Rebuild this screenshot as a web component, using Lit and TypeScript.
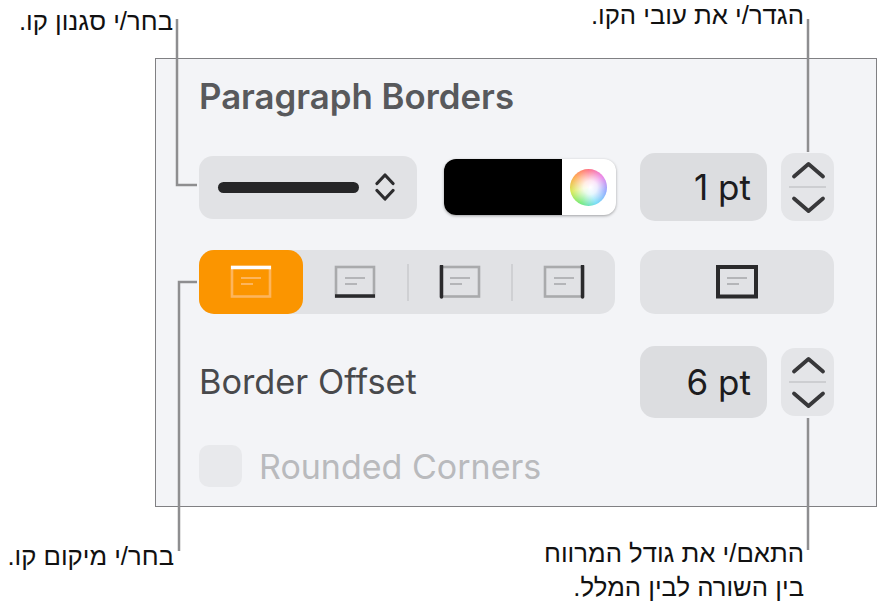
import { LitElement, html, css, svg } from 'lit';
import { customElement } from 'lit/decorators.js';

type Side = 'top' | 'bottom' | 'left' | 'right' | 'all';

/** Small paragraph glyph with the active border side drawn heavier */
function borderIcon(side: Side, selected = false) {
  const muted = selected ? '#fdb55c' : '#a9aaac';
  const strong = selected ? '#ffffff' : '#2a2a2c';
  const lines = selected ? '#fdb55c' : '#b4b5b8';
  const weight = side === 'all' ? 4 : 2.6;
  return html`<svg class="icon" width="42" height="34" viewBox="0 0 42 34">
    <rect x="2" y="2" width="38" height="29.500" fill="none" stroke=${side === 'all' ? strong : muted} stroke-width=${weight} />
    ${svg`
      <path d="M11 13h20M11 19h12" stroke=${lines} stroke-width="2.2" fill="none" />
      ${side === 'top' ? svg`<path d="M1 2.5h40" stroke=${strong} stroke-width="3.5" />` : null}
      ${side === 'bottom' ? svg`<path d="M1 31h40" stroke=${strong} stroke-width="3.5" />` : null}
      ${side === 'left' ? svg`<path d="M2.5 1v31" stroke=${strong} stroke-width="3.5" stroke-linecap="round" />` : null}
      ${side === 'right' ? svg`<path d="M39.5 1v31" stroke=${strong} stroke-width="3.5" stroke-linecap="round" />` : null}
    `}
  </svg>`;
}

@customElement('app-root')
export class AppRoot extends LitElement {
  static styles = css`
    :host {
      display: block;
      position: relative;
      width: 878px;
      height: 611px;
      background: #fff;
      overflow: hidden;
      font-family: Inter, 'Liberation Sans', sans-serif;
    }

    .page {
      padding: 58px 1px 0 155px;
    }

    .panel {
      box-sizing: border-box;
      height: 449px;
      border: 1px solid #808083;
      background: #f3f4f7;
      padding: 0 0 0 43px;
      display: flex;
      flex-direction: column;
    }

    .title {
      height: 94px;
      line-height: 74px;
      font-size: 34.8px;
      font-weight: 600;
      color: #58595c;
      white-space: nowrap;
    }

    .row {
      display: flex;
      align-items: center;
    }

    .row-style {
      height: 68px;
      gap: 0;
    }

    .select {
      box-sizing: border-box;
      width: 218px;
      height: 63px;
      border-radius: 14px;
      background: #e1e2e5;
      display: flex;
      align-items: center;
      gap: 16px;
      padding-left: 19px;
    }

    .select-line {
      width: 141px;
      height: 11px;
      border-radius: 6px;
      background: #262628;
    }

    .well {
      width: 172px;
      height: 56px;
      margin: 0 24px 0 27px;
      border-radius: 12px;
      background: #fff;
      box-shadow: 0 1px 3px rgba(0, 0, 0, 0.35);
      display: flex;
      align-items: center;
      overflow: hidden;
    }

    .well-colour {
      width: 118px;
      height: 100%;
      background: #000;
    }

    .wheel {
      width: 37px;
      height: 37px;
      margin-left: 8px;
      border-radius: 50%;
      background: radial-gradient(circle at 55% 50%, #fff 0, rgba(255, 255, 255, 0.85) 25%, rgba(255, 255, 255, 0) 75%),
        conic-gradient(#ff5a6e, #e45ce0, #6a8cff, #4fd4f5, #62e86a, #d6e84c, #ffa040, #ff5a6e);
    }

    .field {
      box-sizing: border-box;
      width: 127px;
      height: 68px;
      border-radius: 15px;
      background: #dcdde0;
      color: #1c1c1e;
      font-size: 35px;
      text-align: right;
      line-height: 68px;
      padding-right: 16px;
      white-space: nowrap;
    }

    .stepper {
      display: block;
      width: 53px;
      height: 68px;
      margin-left: 14px;
      border-radius: 14px;
      background: #e4e5e8;
    }

    .row-position {
      height: 64px;
      margin-top: 29px;
    }

    .segments {
      width: 416px;
      height: 64px;
      border-radius: 15px;
      background: #e1e2e5;
      display: flex;
      align-items: center;
    }

    .segment {
      height: 64px;
      display: flex;
      align-items: center;
      justify-content: center;
      border-radius: 15px;
    }

    .segment.selected {
      background: #fb9500;
    }

    .w104 {
      width: 104px;
    }

    .w105 {
      width: 105px;
    }

    .w103 {
      width: 103px;
    }

    .w102 {
      width: 102px;
    }

    .divider {
      width: 2px;
      height: 37px;
      background: #cfd0d3;
    }

    .all-borders {
      width: 194px;
      height: 64px;
      margin-left: 25px;
      border-radius: 15px;
      background: #e1e2e5;
      display: flex;
      align-items: center;
      justify-content: center;
    }

    .icon {
      display: block;
    }

    .row-offset {
      height: 72px;
      margin-top: 32px;
    }

    .label {
      width: 441px;
      font-size: 34.3px;
      line-height: 70px;
      color: #48494c;
      white-space: nowrap;
    }

    .row-offset .field {
      height: 72px;
      line-height: 72px;
    }

    .row-rounded {
      margin-top: 27px;
      gap: 17px;
    }

    .checkbox {
      width: 43px;
      height: 42px;
      border-radius: 10px;
      background: #e8e9ec;
    }

    .disabled {
      font-size: 34px;
      color: #b9babd;
      white-space: nowrap;
    }

    .callout {
      position: absolute;
      direction: rtl;
      text-align: right;
      font-family: 'Liberation Sans', Arial, sans-serif;
      font-size: 25.7px;
      line-height: 33px;
      color: #111;
      white-space: nowrap;
    }

    .callout.two-lines {
      line-height: 34px;
    }

    .leaders {
      position: absolute;
      inset: 0;
      pointer-events: none;
    }
  `;

  private _stepper() {
    return html`<svg class="stepper" viewBox="0 0 53 68">
      <path d="M13 23.5 27.500 11 42 23.500" fill="none" stroke="#38383a" stroke-width="3.8" stroke-linecap="round" stroke-linejoin="round" />
      <path d="M8 34h37" stroke="#cdced1" stroke-width="2" />
      <path d="M13 45.5 27.500 58 42 45.500" fill="none" stroke="#38383a" stroke-width="3.8" stroke-linecap="round" stroke-linejoin="round" />
    </svg>`;
  }

  render(): unknown {
    return html`
      <div class="page">
        <section class="panel">
          <div class="title">Paragraph Borders</div>

          <div class="row row-style">
            <div class="select">
              <div class="select-line"></div>
              <svg class="icon" width="20" height="30" viewBox="0 0 20 30">
                <path d="M2 11.5 10 3l8 8.500M2 18.500 10 27l8-8.500" fill="none" stroke="#2c2c2e" stroke-width="3.2" stroke-linecap="round" stroke-linejoin="round" />
              </svg>
            </div>
            <div class="well">
              <div class="well-colour"></div>
              <div class="wheel"></div>
            </div>
            <div class="field">1 pt</div>
            ${this._stepper()}
          </div>

          <div class="row row-position">
            <div class="segments">
              <div class="segment selected w104">${borderIcon('top', true)}</div>
              <div class="segment w105">${borderIcon('bottom')}</div>
              <div class="divider"></div>
              <div class="segment w103">${borderIcon('left')}</div>
              <div class="divider"></div>
              <div class="segment w102">${borderIcon('right')}</div>
            </div>
            <div class="all-borders">${borderIcon('all')}</div>
          </div>

          <div class="row row-offset">
            <div class="label">Border Offset</div>
            <div class="field">6 pt</div>
            ${this._stepper()}
          </div>

          <div class="row row-rounded">
            <div class="checkbox"></div>
            <div class="disabled">Rounded Corners</div>
          </div>
        </section>
      </div>

      <svg class="leaders" width="878" height="611" viewBox="0 0 878 611">
        <g fill="none" stroke="#8e8e90" stroke-width="2.5">
          <path d="M177 19v166h20" />
          <path d="M808 19v133" />
          <path d="M197 282h-18v269" />
          <path d="M808 418v132" />
        </g>
      </svg>

      <div class="callout" style="right:705px;top:5px">בחר/י סגנון קו.</div>
      <div class="callout" style="right:74px;top:-1px">הגדר/י את עובי הקו.</div>
      <div class="callout" style="right:704px;top:540px">בחר/י מיקום קו.</div>
      <div class="callout two-lines" style="right:74px;top:536px">התאם/י את גודל המרווח<br />בין השורה לבין המלל.</div>
    `;
  }
}
